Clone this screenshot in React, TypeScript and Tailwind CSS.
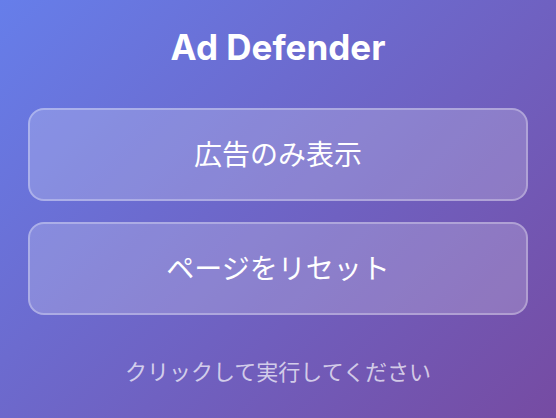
export default function App() {
  return (
    <div
      className="flex h-[418px] w-[556px] flex-col items-center bg-[linear-gradient(135deg,#667eea_0%,#764ba2_100%)] px-[28px] text-white"
      style={{ fontFamily: 'Inter, "Noto Sans CJK JP", sans-serif' }}
    >
      {/* Title */}
      <h1 className="mt-[25px] text-[35px] leading-[44px] font-bold">Ad Defender</h1>

      {/* Actions */}
      <div className="mt-[39px] flex w-full flex-col gap-[21px]">
        <button className="flex h-[93px] w-full items-center justify-center rounded-[16px] border-2 border-white/30 bg-white/20 text-[28px] text-white">
          広告のみ表示
        </button>
        <button className="flex h-[93px] w-full items-center justify-center rounded-[16px] border-2 border-white/30 bg-white/20 text-[28px] text-white">
          ページをリセット
        </button>
      </div>

      <p className="mt-[41px] text-[22px] text-white/70">クリックして実行してください</p>
    </div>
  )
}
